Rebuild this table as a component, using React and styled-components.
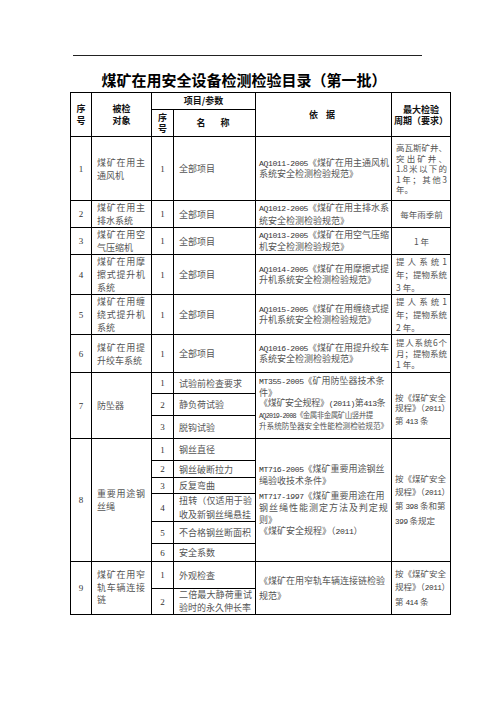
import React from 'react';
import styled, { createGlobalStyle } from 'styled-components';

const GlobalStyle = createGlobalStyle`
  html, body {
    margin: 0;
    padding: 0;
    background: #fff;
  }
  body {
    font-family: "Noto Sans CJK SC", sans-serif;
  }
`;

const Page = styled.div`
  width: 496px;
  height: 702px;
  padding-top: 55px;
  box-sizing: border-box;
`;

const Rule = styled.div`
  margin-left: 73px;
  width: 349px;
  height: 1px;
  background: #222;
`;

const Title = styled.h1`
  margin: 14px 0 2px;
  padding-right: 8px;
  text-align: center;
  font-size: 15px;
  line-height: 20px;
  font-weight: 700;
  color: #000;
`;

const Sheet = styled.table`
  margin-left: 70px;
  width: 380px;
  table-layout: fixed;
  border-collapse: collapse;
  border: 1.5px solid #000;
`;

const Row = styled.tr`
  height: ${(p) => p.$h}px;
`;

const Head = styled.th`
  border: 1px solid #000;
  padding: 0 2px;
  font-size: 9px;
  font-weight: 700;
  line-height: ${(p) => p.$lh || 12}px;
  letter-spacing: ${(p) => p.$ls || 0}px;
  color: #111;
  text-align: center;
  vertical-align: middle;
`;

const Cell = styled.td`
  border: 1px solid #000;
  padding: ${(p) => p.$pad || '0 4px 0 5px'};
  font-size: ${(p) => p.$fs || 9}px;
  line-height: ${(p) => p.$lh || 11}px;
  color: #555;
  text-align: ${(p) => p.$align || 'left'};
  vertical-align: ${(p) => p.$valign || 'middle'};
`;

const Num = styled.td`
  border: 1px solid #000;
  padding: 0;
  font-family: "Liberation Serif", serif;
  font-size: 9px;
  color: #333;
  text-align: center;
  vertical-align: middle;
`;

const Code = styled.span`
  font-family: "Liberation Mono", monospace;
  font-size: 0.9em;
  letter-spacing: -0.4px;
  color: #333;
`;

const Line = styled.span`
  display: block;
  white-space: nowrap;
  margin-top: ${(p) => p.$gap || 0}px;
  ${(p) => p.$fs && `font-size: ${p.$fs}px;`}
  letter-spacing: ${(p) => p.$ls || 0}px;
  ${(p) => p.$ls && `& ${Code} { letter-spacing: ${p.$ls - 0.2}px; }`}
`;

const SpreadLine = styled.span`
  display: flex;
  justify-content: space-between;
  white-space: nowrap;
`;

const Spread = ({ text }) => {
  const parts = text.match(/[A-Za-z0-9.]+|\S/g);
  return (
    <SpreadLine>
      {parts.map((c, i) => (
        <span key={i}>{c}</span>
      ))}
    </SpreadLine>
  );
};

const simpleRows = [
  {
    no: '1', h: 64,
    obj: [['煤矿在用主', true], ['通风机']],
    code: 'AQ1011-2005', basis: ['《煤矿在用主通风机', '系统安全检测检验规范》'],
    period: [['高瓦斯矿井、', true], ['突出矿井、', true], ['1.8 米以下的', true], ['1 年；其他 3', true], ['年。']],
    periodLh: 10.6,
  },
  {
    no: '2', h: 26,
    obj: [['煤矿在用主', true], ['排水系统']],
    code: 'AQ1012-2005', basis: ['《煤矿在用主排水系', '统安全检测检验规范》'],
    period: [['每年雨季前']], center: true,
  },
  {
    no: '3', h: 26,
    obj: [['煤矿在用空', true], ['气压缩机']],
    code: 'AQ1013-2005', basis: ['《煤矿在用空气压缩', '机安全检测检验规范》'],
    period: [['1 年']], center: true,
  },
  {
    no: '4', h: 40,
    obj: [['煤矿在用摩', true], ['擦式提升机', true], ['系统']],
    code: 'AQ1014-2005', basis: ['《煤矿在用摩擦式提', '升机系统安全检测检验规范》'],
    period: [['提人系统 1', true], ['年；提物系统', true], ['3 年。']],
  },
  {
    no: '5', h: 40,
    obj: [['煤矿在用缠', true], ['绕式提升机', true], ['系统']],
    code: 'AQ1015-2005', basis: ['《煤矿在用缠绕式提', '升机系统安全检测检验规范》'],
    period: [['提人系统 1', true], ['年；提物系统', true], ['2 年。']],
  },
  {
    no: '6', h: 38,
    obj: [['煤矿在用提', true], ['升绞车系统']],
    code: 'AQ1016-2005', basis: ['《煤矿在用提升绞车', '系统安全检测检验规范》'],
    period: [['提人系统6个', true], ['月；提物系统', true], ['1 年。']],
    periodLh: 11,
  },
];

const renderLines = (lines) =>
  lines.map(([text, spread], i) =>
    spread ? <Spread key={i} text={text} /> : <Line key={i}>{text}</Line>
  );

const App = () => {
  return (
    <Page>
      <GlobalStyle />
      <Rule />
      <Title>煤矿在用安全设备检测检验目录（第一批）</Title>
      <Sheet>
        <colgroup>
          <col style={{ width: 21 }} />
          <col style={{ width: 60 }} />
          <col style={{ width: 22 }} />
          <col style={{ width: 82 }} />
          <col style={{ width: 136 }} />
          <col style={{ width: 59 }} />
        </colgroup>
        <thead>
          <Row $h={17}>
            <Head rowSpan={2}>序<br />号</Head>
            <Head rowSpan={2}>被检<br />对象</Head>
            <Head colSpan={2}>项目/参数</Head>
            <Head rowSpan={2} $ls={3}>依 据</Head>
            <Head rowSpan={2} $lh={11}>最大检验<br />周期（要求）</Head>
          </Row>
          <Row $h={27}>
            <Head $lh={11.5}>序<br />号</Head>
            <Head $ls={3}>名　称</Head>
          </Row>
        </thead>
        <tbody>
          {simpleRows.map((r) => (
            <Row key={r.no} $h={r.h}>
              <Num>{r.no}</Num>
              <Cell $lh={13} $pad="0 6px 0 5px">{renderLines(r.obj)}</Cell>
              <Num>1</Num>
              <Cell>全部项目</Cell>
              <Cell $pad="0 3px" $lh={r.no === '2' ? 12 : 10.5}>
                <Line><Code>{r.code}</Code>{r.basis[0]}</Line>
                <Line>{r.basis[1]}</Line>
              </Cell>
              <Cell $pad="0 3px 0 4px" $fs={8.5} $lh={r.periodLh || 13} $align={r.center ? 'center' : 'left'}>
                {renderLines(r.period)}
              </Cell>
            </Row>
          ))}

          <Row $h={21}>
            <Num rowSpan={3}>7</Num>
            <Cell rowSpan={3} $pad="0 6px 0 5px">防坠器</Cell>
            <Num>1</Num>
            <Cell>试验前检查要求</Cell>
            <Cell rowSpan={3} $pad="3px 3px 0" $valign="top" $lh={10.6}>
              <Line><Code>MT355-2005</Code>《矿用防坠器技术条</Line>
              <Line>件》</Line>
              <Line $ls={-0.3}>《煤矿安全规程》<Code>(2011)</Code>第<Code>413</Code>条</Line>
              <Line $fs={7.5} $ls={-0.5}><Code>AQ2019-2008</Code>《金属非金属矿山竖井提</Line>
              <Line $fs={7.6}>升系统防坠器安全性能检测检验规范》</Line>
            </Cell>
            <Cell rowSpan={3} $pad="8px 2px 0 3px" $fs={8.5} $lh={10.5}>
              <Line>按《煤矿安全</Line>
              <Line>规程》（<Code>2011</Code>）</Line>
              <Line>第 <Code>413</Code> 条</Line>
            </Cell>
          </Row>
          <Row $h={22}>
            <Num>2</Num>
            <Cell>静负荷试验</Cell>
          </Row>
          <Row $h={23}>
            <Num>3</Num>
            <Cell>脱钩试验</Cell>
          </Row>

          <Row $h={22}>
            <Num rowSpan={6}>8</Num>
            <Cell rowSpan={6} $lh={13} $pad="0 6px 0 5px">
              <Spread text="重要用途钢" />
              <Line>丝绳</Line>
            </Cell>
            <Num>1</Num>
            <Cell>钢丝直径</Cell>
            <Cell rowSpan={6} $pad="0 3px" $lh={11.5}>
              <Line><Code>MT716-2005</Code>《煤矿重要用途钢丝</Line>
              <Line>绳验收技术条件》</Line>
              <Line $gap={3}><Code>MT717-1997</Code>《煤矿重要用途在用</Line>
              <Spread text="钢丝绳性能测定方法及判定规" />
              <Line>则》</Line>
              <Line>《煤矿安全规程》（<Code>2011</Code>）</Line>
            </Cell>
            <Cell rowSpan={6} $pad="0 2px 0 3px" $fs={8.5} $lh={12.5}>
              <Line>按《煤矿安全</Line>
              <Line>规程》（<Code>2011</Code>）</Line>
              <Line>第 <Code>398</Code> 条和第</Line>
              <Line><Code>399</Code> 条规定</Line>
            </Cell>
          </Row>
          <Row $h={17}>
            <Num>2</Num>
            <Cell>钢丝破断拉力</Cell>
          </Row>
          <Row $h={16}>
            <Num>3</Num>
            <Cell>反复弯曲</Cell>
          </Row>
          <Row $h={27}>
            <Num>4</Num>
            <Cell $lh={13.5} $valign="top" $pad="0 3px 0 5px">
              <Spread text="扭转（仅适用于验" />
              <Line>收及新钢丝绳悬挂</Line>
            </Cell>
          </Row>
          <Row $h={22}>
            <Num>5</Num>
            <Cell>不合格钢丝断面积</Cell>
          </Row>
          <Row $h={18}>
            <Num>6</Num>
            <Cell>安全系数</Cell>
          </Row>

          <Row $h={27}>
            <Num rowSpan={2}>9</Num>
            <Cell rowSpan={2} $lh={12.5} $pad="0 6px 0 5px">
              <Spread text="煤矿在用窄" />
              <Spread text="轨车辆连接" />
              <Line>链</Line>
            </Cell>
            <Num>1</Num>
            <Cell>外观检查</Cell>
            <Cell rowSpan={2} $pad="0 3px" $lh={15}>
              <Line>《煤矿在用窄轨车辆连接链检验</Line>
              <Line>规范》</Line>
            </Cell>
            <Cell rowSpan={2} $pad="0 2px 0 3px" $fs={8.5} $lh={13}>
              <Line>按《煤矿安全</Line>
              <Line>规程》（<Code>2011</Code>）</Line>
              <Line>第 <Code>414</Code> 条</Line>
            </Cell>
          </Row>
          <Row $h={26}>
            <Num>2</Num>
            <Cell $lh={12.5} $pad="0 3px 0 5px">
              <Spread text="二倍最大静荷重试" />
              <Line>验时的永久伸长率</Line>
            </Cell>
          </Row>
        </tbody>
      </Sheet>
    </Page>
  );
};

export default App;
